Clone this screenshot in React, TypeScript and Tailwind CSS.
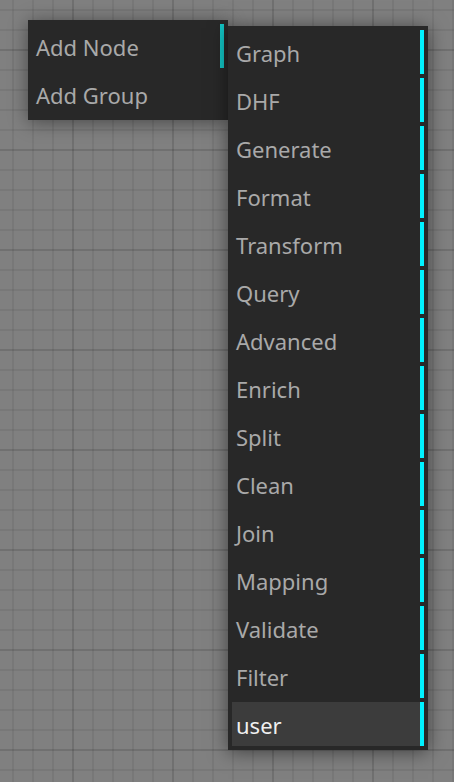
import React from "react";

type Item = { label: string; active?: boolean };

const mainItems: Item[] = [{ label: "Add Node", active: true }, { label: "Add Group" }];

const subItems: Item[] = [
  "Graph",
  "DHF",
  "Generate",
  "Format",
  "Transform",
  "Query",
  "Advanced",
  "Enrich",
  "Split",
  "Clean",
  "Join",
  "Mapping",
  "Validate",
  "Filter",
].map((label) => ({ label }));

const MenuRow = ({ item, bar }: { item: Item; bar: "dim" | "bright" | "none" }) => {
  return (
    <div
      className={`flex h-[44px] items-center justify-between pl-[4px] text-[22px] ${
        item.active && bar === "bright" ? "bg-[#3c3c3c] text-[#f0f0f0]" : "text-[#a9a9a9]"
      }`}
    >
      <span className="pt-[2px] leading-none">{item.label}</span>
      {bar === "dim" && <span className="h-full w-[4px] bg-[#12c4c4]" />}
      {bar === "bright" && <span className="h-full w-[4px] bg-[#00f2ff]" />}
    </div>
  );
};

const App = () => {
  return (
    <div
      className="relative h-[782px] w-[454px] overflow-hidden bg-[#808080] bg-[image:linear-gradient(to_right,rgba(0,0,0,0.07)_2px,transparent_2px),linear-gradient(to_bottom,rgba(0,0,0,0.07)_2px,transparent_2px),linear-gradient(to_right,rgba(0,0,0,0.06)_2px,transparent_2px),linear-gradient(to_bottom,rgba(0,0,0,0.06)_2px,transparent_2px)] bg-[size:100px_100px,100px_100px,20px_20px,20px_20px] bg-[position:72px_49px,72px_49px,12px_9px,12px_9px]"
      style={{ fontFamily: '"Noto Sans", "Open Sans", sans-serif' }}
    >
      {/* context menu */}
      <div className="absolute left-[28px] top-[20px] flex w-[200px] flex-col gap-[4px] bg-[#282828] p-[4px] shadow-[0_2px_18px_rgba(0,0,0,0.45)]">
        {mainItems.map((it) => (
          <MenuRow key={it.label} item={it} bar={it.active ? "dim" : "none"} />
        ))}
      </div>

      {/* submenu */}
      <div className="absolute left-[228px] top-[26px] flex w-[200px] flex-col gap-[4px] bg-[#282828] p-[4px] shadow-[0_2px_18px_rgba(0,0,0,0.5)]">
        {subItems.map((it) => (
          <MenuRow key={it.label} item={it} bar="bright" />
        ))}
        <MenuRow item={{ label: "user", active: true }} bar="bright" />
      </div>
    </div>
  );
};

export default App;
